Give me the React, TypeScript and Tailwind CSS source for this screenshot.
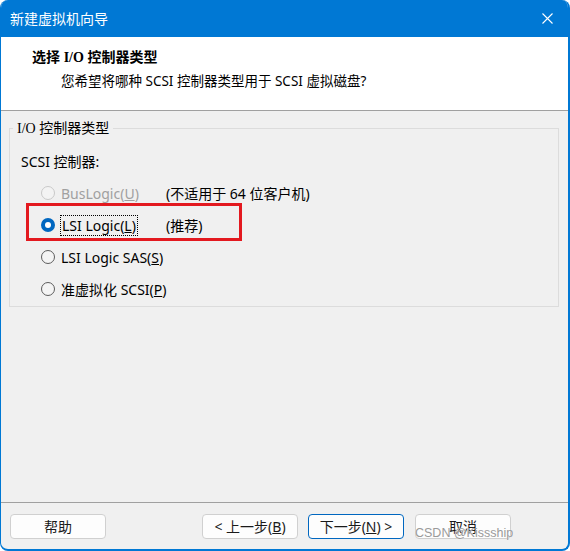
import React from "react";

const F = { fontFamily: '"Noto Sans", "Noto Sans CJK SC", sans-serif' } as const;
const SERIF = { fontFamily: '"Liberation Serif", "Noto Sans CJK SC", serif' } as const;

function Radio({ state }: { state: "off" | "on" | "disabled" }) {
  if (state === "on")
    return (
      <span className="w-[14px] h-[14px] rounded-full bg-[#0067c0] flex items-center justify-center shrink-0">
        <span className="w-[6px] h-[6px] rounded-full bg-white" />
      </span>
    );
  if (state === "disabled")
    return <span className="w-[14px] h-[14px] rounded-full border border-[#c9c9c9] bg-[#f3f3f3] shrink-0" />;
  return <span className="w-[14px] h-[14px] rounded-full border border-[#5c5c5c] bg-[#f4f4f4] shrink-0" />;
}

function Btn({ children, primary }: { children: React.ReactNode; primary?: boolean }) {
  return (
    <div
      className={
        "w-[96px] h-[25px] rounded-[4px] border bg-[#fdfdfd] flex items-center justify-center text-[14px] text-[#1a1a1a] " +
        (primary ? "border-[#0067c0]" : "border-[#d0d0d0]")
      }
    >
      {children}
    </div>
  );
}

export default function App() {
  return (
    <div className="w-[570px] h-[551px] bg-white" style={F}>
      <div className="relative w-[570px] h-[551px] rounded-[8px] overflow-hidden border-l border-r-2 border-b-2 border-[#0078d4] bg-[#f0f0f0] flex flex-col">
        {/* title bar */}
        <div className="h-[37px] bg-[#0078d4] flex items-center justify-between pl-[9px] pr-[15px] shrink-0">
          <span className="text-white text-[14px] leading-[20px]">新建虚拟机向导</span>
          <svg width="11" height="11" viewBox="0 0 11 11">
            <path d="M0.5 0.5 L10.5 10.5 M10.5 0.5 L0.5 10.5" stroke="white" strokeWidth="1.1" />
          </svg>
        </div>
        {/* header */}
        <div className="h-[74px] bg-white border-b border-[#a0a0a0] pl-[31px] pt-[10px] shrink-0">
          <div className="text-[14px] leading-[20px] font-bold text-black">
            选择 <span style={SERIF}>I/O</span> 控制器类型
          </div>
          <div className="mt-[3px] pl-[29px] text-[13.5px] leading-[20px] text-black">
            您希望将哪种 SCSI 控制器类型用于 SCSI 虚拟磁盘?
          </div>
        </div>
        {/* body */}
        <div className="flex-1 pl-[8px]">
          <fieldset className="mt-[8px] w-[550px] border border-[#dcdcdc] pt-[7px] pb-[1px] pl-0">
            <legend className="ml-[3px] px-[4px] text-[14px] leading-[18px] text-black">
              <span style={SERIF}>I/O</span> 控制器类型
            </legend>
            <div className="pl-[11px]">
              <div className="h-[32px] flex items-center text-[14px] text-black">SCSI 控制器:</div>
              <div className="h-[32px] flex items-center text-[14px] pl-[20px]">
                <Radio state="disabled" />
                <span className="ml-[6px] w-[105px] text-[#a0a0a0]">
                  BusLogic(<span className="underline">U</span>)
                </span>
                <span className="text-black">(不适用于 64 位客户机)</span>
              </div>
              <div className="h-[32px] flex items-center text-[14px] pl-[20px]">
                <Radio state="on" />
                <span className="ml-[5px] w-[106px]">
                  <span className="border border-dotted border-black px-px text-black">
                    LSI Logic(<span className="underline">L</span>)
                  </span>
                </span>
                <span className="text-black">(推荐)</span>
              </div>
              <div className="h-[32px] flex items-center text-[14px] pl-[20px]">
                <Radio state="off" />
                <span className="ml-[6px] text-black">
                  LSI Logic SAS(<span className="underline">S</span>)
                </span>
              </div>
              <div className="h-[32px] flex items-center text-[14px] pl-[20px]">
                <Radio state="off" />
                <span className="ml-[6px] text-black">
                  准虚拟化 SCSI(<span className="underline">P</span>)
                </span>
              </div>
            </div>
          </fieldset>
        </div>
        {/* footer */}
        <div className="h-[47px] border-t border-[#a0a0a0] pt-[11px] pl-[9px] pr-[57px] flex items-start justify-between shrink-0">
          <Btn>帮助</Btn>
          <div className="flex gap-[10px]">
            <Btn>
              &lt; 上一步(<span className="underline">B</span>)
            </Btn>
            <Btn primary>
              下一步(<span className="underline">N</span>) &gt;
            </Btn>
            <div className="ml-px">
              <Btn>取消</Btn>
            </div>
          </div>
        </div>
        {/* red annotation box */}
        <div className="absolute left-[25px] top-[203px] w-[216px] h-[38px] border-[3px] border-[#e3191f]" />
        {/* watermark */}
        <div
          className="absolute left-[414px] top-[525px] text-[12.5px] leading-[16px] text-[#9a9a9a]"
          style={{ fontFamily: '"Liberation Sans", Arial, sans-serif', textShadow: "0 0 1px #fff" }}
        >
          CSDN @Kissship
        </div>
      </div>
    </div>
  );
}
